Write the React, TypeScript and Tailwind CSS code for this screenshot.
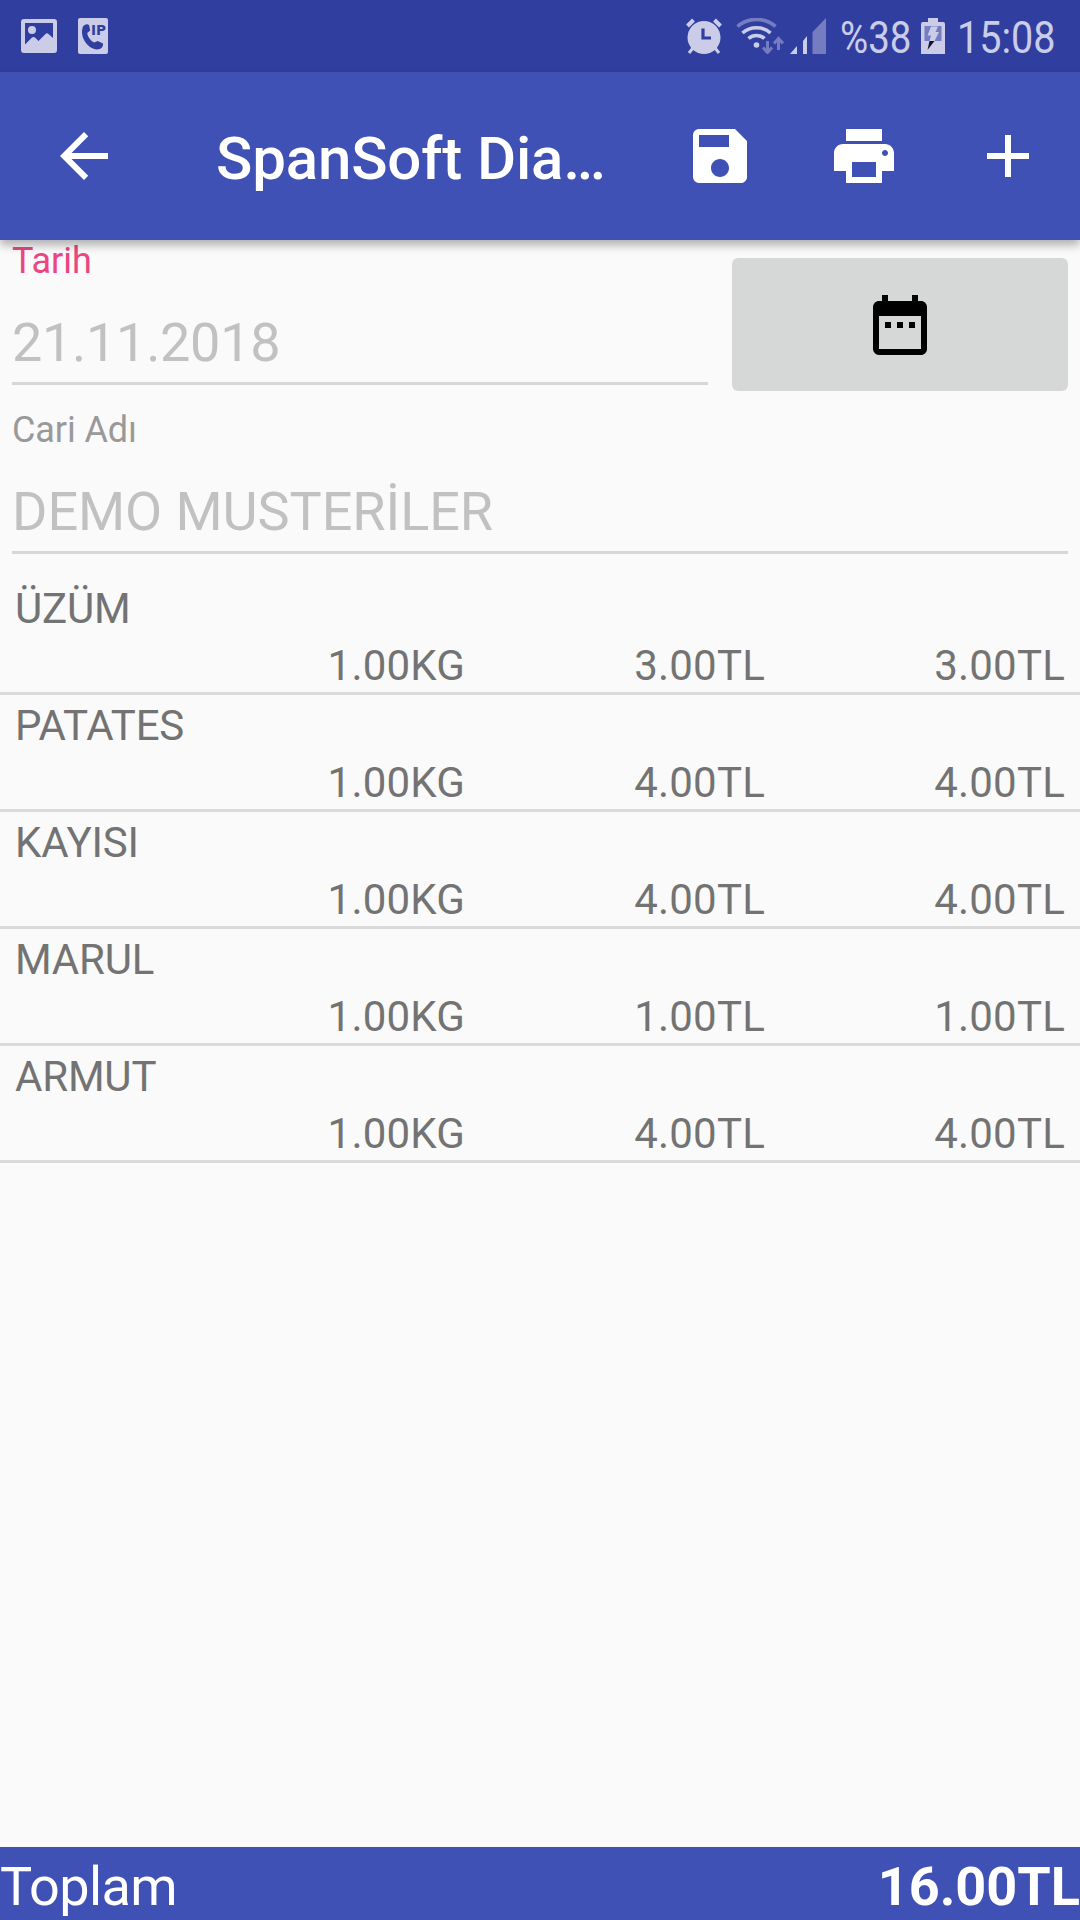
import { MdAdd, MdArrowBack, MdDateRange, MdPrint, MdSave } from 'react-icons/md';

const saleItems = [
  { name: 'ÜZÜM', quantity: '1.00KG', price: '3.00TL', total: '3.00TL' },
  { name: 'PATATES', quantity: '1.00KG', price: '4.00TL', total: '4.00TL' },
  { name: 'KAYISI', quantity: '1.00KG', price: '4.00TL', total: '4.00TL' },
  { name: 'MARUL', quantity: '1.00KG', price: '1.00TL', total: '1.00TL' },
  { name: 'ARMUT', quantity: '1.00KG', price: '4.00TL', total: '4.00TL' },
];

const PictureIcon = () => (
  <svg className="h-[34px] w-9" viewBox="0 0 36 34" fill="currentColor">
    <path
      fillRule="evenodd"
      d="M3 0h30a3 3 0 0 1 3 3v28a3 3 0 0 1-3 3H3a3 3 0 0 1-3-3V3a3 3 0 0 1 3-3Zm1 4v21.500l7-7q1.500-1 3 0l3.500 3.500 7-7q1.500-1.500 3 0l4.500 4V4Z"
    />
    <circle cx="11" cy="11" r="4" />
  </svg>
);

const IpCallIcon = () => (
  <svg className="h-9 w-[30px]" viewBox="0 0 30 36">
    <rect width="30" height="36" rx="2" fill="#cacce8" />
    <path
      d="M5 8.500C7 6 9.500 5.500 11 7l1.200 5.500-3 2.500c.5 4 3.500 7.800 7 9.600l3.500-1.500 5.300 2.400c.5 3-2 6-6 6C10 31 1 19 5 8.500Z"
      fill="#303f9f"
    />
    <text
      x="13"
      y="17"
      textLength="15"
      lengthAdjust="spacingAndGlyphs"
      fill="#303f9f"
      className="font-['DejaVu_Sans',sans-serif] text-[14px] font-bold"
    >
      IP
    </text>
  </svg>
);

const AlarmIcon = () => (
  <svg className="h-9 w-9" viewBox="0 0 36 36" fill="none">
    <circle cx="18" cy="19.500" r="16.500" fill="#cacce8" />
    <path d="m1.500 8 6-6M34.500 8l-6-6" stroke="#cacce8" strokeWidth="4" />
    <path d="m7 30-4 5M29 30l4 5" stroke="#cacce8" strokeWidth="3" />
    <path d="M17 10.500v9.500h8" stroke="#303f9f" strokeWidth="3.200" />
  </svg>
);

const WifiIcon = () => (
  <svg className="h-9 w-12" viewBox="0 0 48 36" fill="none">
    <path d="M1.500 8.500C12-1 29-1 39.500 8.500" stroke="#757dc0" strokeWidth="3.600" />
    <path d="M6.500 15C14 8 27 8 34.500 15" stroke="#cacce8" strokeWidth="3.600" />
    <path d="M12.500 20.500c4.500-4 11.500-4 16 0" stroke="#cacce8" strokeWidth="3.600" />
    <circle cx="20.500" cy="27" r="2.800" fill="#cacce8" />
    <path
      d="M31.500 23v11M27 29.500l4.500 5 4.500-5M42.500 32V21M38 25.500l4.500-5 4.500 5"
      stroke="#757dc0"
      strokeWidth="3"
    />
  </svg>
);

const SignalIcon = () => (
  <svg className="h-9 w-9" viewBox="0 0 36 36">
    <path d="M0 36 7 28v8ZM13 23l4-5v18h-4Z" fill="#cacce8" />
    <path d="M22.500 14 36 0v36H22.500Z" fill="#757dc0" />
  </svg>
);

const BatteryIcon = () => (
  <svg className="h-9 w-6" viewBox="0 0 24 36">
    <path d="M7 0h10v4h5a2 2 0 0 1 2 2v30H0V6a2 2 0 0 1 2-2h5Z" fill="#cacce8" />
    <path d="M3.500 8h17v15h-17Z" fill="#757dc0" />
    <path d="M10 8.500h7l-2.500 5.500H18L13.500 23H8.500l1.500-5.500H6.500Z" fill="#cacce8" />
    <path d="M8.500 23h5L6.500 32Z" fill="#11152f" />
  </svg>
);

const StatusBar = () => (
  <div className="flex h-[72px] items-center bg-[#303f9f] pl-[21px] text-[45px] leading-none text-[#cacce8]">
    <PictureIcon />
    <div className="ml-[21px]">
      <IpCallIcon />
    </div>
    <div className="ml-auto flex items-center pr-6">
      <AlarmIcon />
      <div className="ml-[14px]">
        <WifiIcon />
      </div>
      <div className="ml-[6px]">
        <SignalIcon />
      </div>
      <div className="ml-[14px] w-[71px] pt-0.5">
        <span className="inline-block origin-left scale-x-[0.855]">%38</span>
      </div>
      <div className="ml-[10px]">
        <BatteryIcon />
      </div>
      <div className="ml-3 w-[99px] pt-0.5">
        <span className="inline-block origin-left scale-x-[0.88]">15:08</span>
      </div>
    </div>
  </div>
);

const Toolbar = () => (
  <header className="relative z-10 flex h-[168px] items-center bg-[#3f51b5] text-[72px] text-white shadow-[0_5px_9px_rgba(0,0,0,0.3)]">
    <button className="flex w-[168px] justify-center">
      <MdArrowBack />
    </button>
    <h1 className="ml-12 flex-1 truncate pt-1.5 text-[60px] leading-[72px] font-medium tracking-[-0.15px]">
      SpanSoft Dia…
    </h1>
    <button className="flex w-36 justify-center">
      <MdSave />
    </button>
    <button className="flex w-36 justify-center">
      <MdPrint />
    </button>
    <button className="flex w-36 justify-center">
      <MdAdd />
    </button>
  </header>
);

type FieldProps = {
  label: string;
  value: string;
  labelClass: string;
  valueClass: string;
};

const Field = ({ label, value, labelClass, valueClass }: FieldProps) => (
  <div className="h-[169px] flex-1">
    <div className="flex h-[145px] flex-col border-b-3 border-[#d6d6d6]">
      <span className={`text-[36px] leading-[42px] ${labelClass}`}>{label}</span>
      <span className={`mt-[29px] text-[54px] leading-[64px] text-[#c1c1c1] ${valueClass}`}>{value}</span>
    </div>
  </div>
);

const App = () => (
  <div className="flex h-[1920px] w-[1080px] flex-col overflow-hidden bg-[#fafafa] font-[Roboto,sans-serif]">
    <StatusBar />
    <Toolbar />
    <div className="flex px-3">
      <Field
        label="Tarih"
        value="21.11.2018"
        labelClass="text-[#e94682]"
        valueClass="tracking-[-0.3px]"
      />
      <button className="mt-[18px] ml-6 flex h-[133px] w-[336px] items-center justify-center rounded-md bg-[#d6d7d7] text-[72px] text-black">
        <MdDateRange />
      </button>
    </div>
    <div className="flex px-3">
      <Field
        label="Cari Adı"
        value="DEMO MUSTERİLER"
        labelClass="text-[#999999] tracking-[-0.1px]"
        valueClass="tracking-[-0.06px]"
      />
    </div>
    <ul className="flex-1 text-[42px] leading-[49px] text-[#737373]">
      {saleItems.map((item) => (
        <li key={item.name} className="h-[117px] border-b-3 border-[#dadada] px-[15px] pt-1.5">
          <div className="tracking-[-0.2px]">{item.name}</div>
          <div className="mt-2 flex text-right tracking-[0.2px]">
            <span className="w-[450px]">{item.quantity}</span>
            <span className="w-[300px]">{item.price}</span>
            <span className="w-[300px]">{item.total}</span>
          </div>
        </li>
      ))}
    </ul>
    <footer className="flex h-[73px] items-center justify-between bg-[#3f51b5] pt-1.5 text-[54px] leading-[64px] text-white">
      <span className="tracking-[-0.6px]">Toplam</span>
      <span className="font-bold">16.00TL</span>
    </footer>
  </div>
);

export default App;
